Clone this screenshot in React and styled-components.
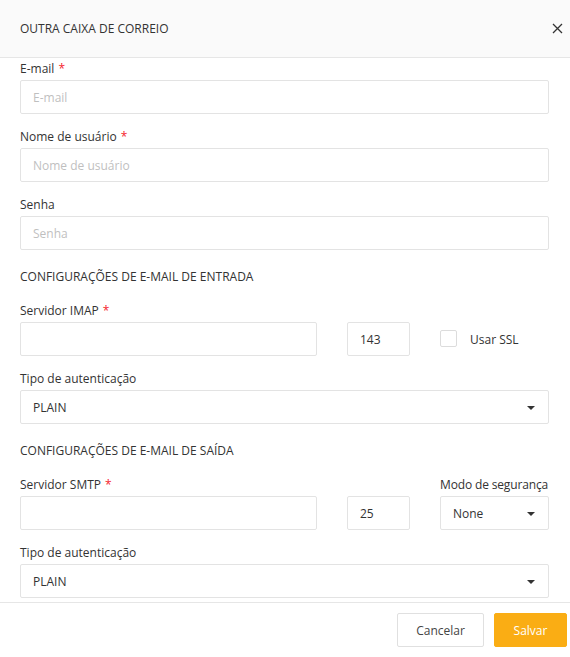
import React from "react";
import styled, { createGlobalStyle } from "styled-components";

const GlobalStyle = createGlobalStyle`
  html, body {
    margin: 0;
    padding: 0;
    background: #ffffff;
  }
  body {
    font-family: "Open Sans", "Noto Sans", sans-serif;
    font-size: 12px;
    color: #333333;
  }
  * {
    box-sizing: border-box;
  }
`;

const Modal = styled.div`
  width: 570px;
  height: 657px;
  display: flex;
  flex-direction: column;
  background: #fff;
  overflow: hidden;
`;

const Header = styled.div`
  height: 58px;
  flex-shrink: 0;
  display: flex;
  align-items: center;
  justify-content: space-between;
  padding: 0 3px 0 20px;
  background: #fafafa;
  border-bottom: 1px solid #e6e6e6;
`;

const Title = styled.h1`
  margin: 0;
  font-size: 12px;
  font-weight: 400;
  color: #333;
`;

const CloseButton = styled.button`
  width: 20px;
  height: 20px;
  border: 0;
  padding: 0;
  background: transparent;
  display: flex;
  align-items: center;
  justify-content: center;
  cursor: pointer;
`;

const Body = styled.div`
  flex: 1;
  padding: 2px 21px 0 20px;
  overflow: hidden;
`;

const Field = styled.div`
  margin-bottom: 14px;
`;

const Label = styled.label`
  display: block;
  line-height: 18px;
  height: 18px;
  margin-bottom: 2px;
  font-size: 12px;
  color: #333;
  white-space: nowrap;
  letter-spacing: ${(p) => (p.$tight ? "-0.15px" : "0")};
`;

const Star = styled.span`
  color: #f5222d;
  margin-left: 4px;
`;

const Input = styled.input`
  display: block;
  width: 100%;
  height: 34px;
  padding: 0 12px;
  border: 1px solid #e3e3e3;
  border-radius: 2px;
  font-family: inherit;
  font-size: 12px;
  color: #333;
  outline: none;
  background: #fff;

  &::placeholder {
    color: #bfbfbf;
  }
`;

const SectionTitle = styled.div`
  line-height: 18px;
  margin: 18px 0 16px;
  font-size: 12px;
  color: #333;
`;

const Row = styled.div`
  display: grid;
  grid-template-columns: 297px 63px 1fr;
  column-gap: 30px;
  margin-bottom: 14px;
`;

const SelectBox = styled.div`
  height: 34px;
  display: flex;
  align-items: center;
  justify-content: space-between;
  padding: 0 13px 0 12px;
  border: 1px solid #e3e3e3;
  border-radius: 2px;
  font-size: 12px;
  color: #333;
  background: #fff;
`;

const Caret = styled.span`
  width: 0;
  height: 0;
  border-left: 4px solid transparent;
  border-right: 4px solid transparent;
  border-top: 4px solid #333;
  margin-top: 2px;
`;

const CheckWrap = styled.label`
  display: flex;
  align-items: center;
  height: 34px;
  margin-top: 20px;
  gap: 13px;
  font-size: 12px;
  color: #333;
`;

const CheckBox = styled.span`
  width: 17px;
  height: 17px;
  border: 1px solid #dcdcdc;
  border-radius: 2px;
  background: #fff;
  margin-top: -1px;
`;

const Footer = styled.div`
  height: 55px;
  flex-shrink: 0;
  border-top: 1px solid #e6e6e6;
  display: flex;
  justify-content: flex-end;
  align-items: flex-start;
  gap: 10px;
  padding: 10px 3px 0 0;
`;

const Button = styled.button`
  height: 34px;
  padding: 0;
  width: ${(p) => (p.$primary ? "73px" : "87px")};
  border-radius: 2px;
  border: 1px solid ${(p) => (p.$primary ? "#faad14" : "#e0e0e0")};
  background: ${(p) => (p.$primary ? "#faad14" : "#fff")};
  color: ${(p) => (p.$primary ? "#fff" : "#444")};
  font-family: inherit;
  font-size: 12px;
  cursor: pointer;
`;

const Select = ({ value }) => (
  <SelectBox>
    <span>{value}</span>
    <Caret />
  </SelectBox>
);

const TextField = ({ label, required, placeholder }) => (
  <Field>
    <Label>
      {label}
      {required && <Star>*</Star>}
    </Label>
    <Input placeholder={placeholder} />
  </Field>
);

const App = () => {
  return (
    <>
      <GlobalStyle />
      <Modal>
        <Header>
          <Title>OUTRA CAIXA DE CORREIO</Title>
          <CloseButton aria-label="Fechar">
            <svg width="11" height="11" viewBox="0 0 11 11">
              <path d="M1 1L10 10M10 1L1 10" stroke="#333" strokeWidth="1.3" fill="none" />
            </svg>
          </CloseButton>
        </Header>

        <Body>
          <TextField label="E-mail" required placeholder="E-mail" />
          <TextField label="Nome de usuário" required placeholder="Nome de usuário" />
          <TextField label="Senha" placeholder="Senha" />

          <SectionTitle>CONFIGURAÇÕES DE E-MAIL DE ENTRADA</SectionTitle>

          <Row>
            <div>
              <Label>
                Servidor IMAP<Star>*</Star>
              </Label>
              <Input />
            </div>
            <div>
              <Label>&nbsp;</Label>
              <Input defaultValue="143" />
            </div>
            <CheckWrap>
              <CheckBox />
              Usar SSL
            </CheckWrap>
          </Row>

          <Field>
            <Label>Tipo de autenticação</Label>
            <Select value="PLAIN" />
          </Field>

          <SectionTitle>CONFIGURAÇÕES DE E-MAIL DE SAÍDA</SectionTitle>

          <Row>
            <div>
              <Label>
                Servidor SMTP<Star>*</Star>
              </Label>
              <Input />
            </div>
            <div>
              <Label>&nbsp;</Label>
              <Input defaultValue="25" />
            </div>
            <div>
              <Label $tight>Modo de segurança</Label>
              <Select value="None" />
            </div>
          </Row>

          <Field>
            <Label>Tipo de autenticação</Label>
            <Select value="PLAIN" />
          </Field>
        </Body>

        <Footer>
          <Button>Cancelar</Button>
          <Button $primary>Salvar</Button>
        </Footer>
      </Modal>
    </>
  );
};

export default App;
